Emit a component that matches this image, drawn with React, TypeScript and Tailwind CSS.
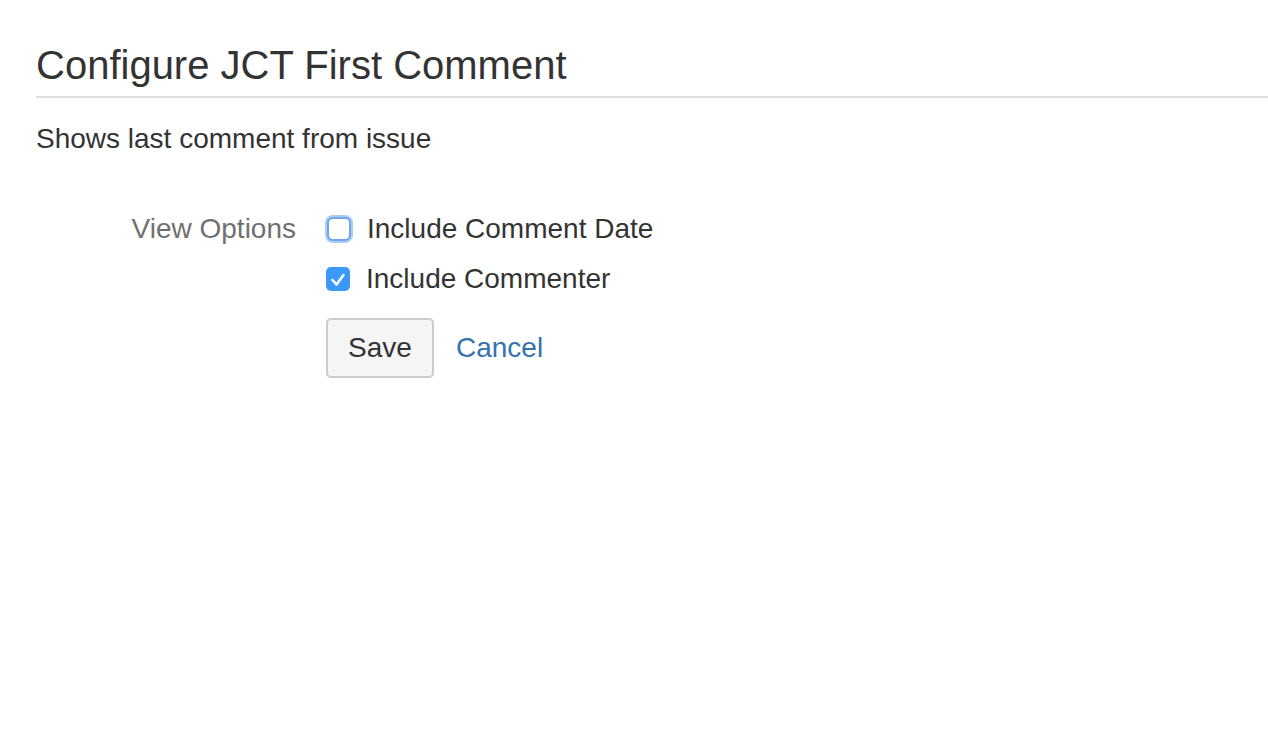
import React from "react";

export default function App() {
  return (
    <div className="min-h-[738px] w-[1268px] bg-white pl-[36px] text-[#333333]" style={{ fontFamily: '"Liberation Sans", Arial, Helvetica, sans-serif' }}>
      <h1 className="pt-[42px] pb-[8px] text-[40px] leading-[46px] font-normal border-b-2 border-[#dddddd]">Configure JCT First Comment</h1>
      <p className="mt-[26px] text-[28px] leading-[30px]">Shows last comment from issue</p>
      <div className="mt-[60px] flex">
        <div className="w-[260px] text-right text-[28px] leading-[30px] text-[#707070]">View Options</div>
        <div className="ml-[30px] flex flex-col">
          <label className="flex items-center h-[30px]">
            <span className="ml-[1px] w-[24px] h-[24px] rounded-[6px] border-[2px] border-[#6ea6ee] bg-white shadow-[0_0_0_2px_#a9cbf6]"></span>
            <span className="ml-[16px] text-[28px] leading-[30px]">Include Comment Date</span>
          </label>
          <label className="mt-[20px] flex items-center h-[30px]">
            <span className="w-[24px] h-[24px] rounded-[5px] bg-[#3b99fc] flex items-center justify-center">
              <svg width="24" height="24" viewBox="0 0 24 24"><path d="M6.5 13 L10.5 17.5 L17.5 8" fill="none" stroke="white" strokeWidth="2.6" strokeLinecap="round" strokeLinejoin="round" /></svg>
            </span>
            <span className="ml-[16px] text-[28px] leading-[30px]">Include Commenter</span>
          </label>
          <div className="mt-[24px] flex items-center">
            <button className="w-[108px] h-[60px] rounded-[5px] border-2 border-[#cccccc] bg-[#f5f5f5] text-[28px] text-[#333333]">Save</button>
            <a className="ml-[22px] text-[28px] text-[#3572b0]">Cancel</a>
          </div>
        </div>
      </div>
    </div>
  );
}
